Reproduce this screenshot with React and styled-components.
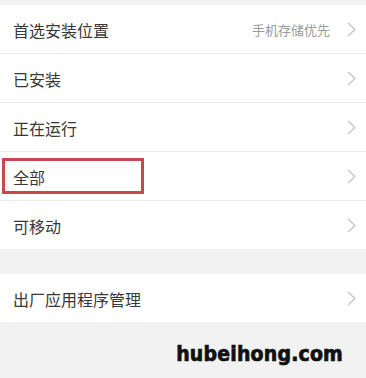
import React from "react";
import styled, { createGlobalStyle } from "styled-components";

const Global = createGlobalStyle`
  html, body { margin: 0; padding: 0; background: #f2f2f2; }
  body { font-family: "Noto Sans CJK SC", "Noto Sans", sans-serif; }
  #root { width: 366px; height: 378px; overflow: hidden; }
`;

const Page = styled.div`
  width: 366px;
  height: 378px;
  background: #f2f2f2;
  padding-top: 5px;
  box-sizing: border-box;
  display: flex;
  flex-direction: column;
`;

const Section = styled.div`
  background: #fff;
  margin-bottom: ${(p) => p.$gap || 0}px;
`;

const Row = styled.div`
  position: relative;
  height: 48px;
  display: flex;
  align-items: center;
  padding: 0 10px 0 13px;
  border-bottom: ${(p) => (p.$last ? "none" : "1px solid #ebebeb")};
`;

const Label = styled.div`
  flex: 1;
  font-size: 16px;
  color: #383838;
  padding-top: 1px;
`;

const Value = styled.div`
  font-size: 13px;
  color: #9a9a9a;
  margin-right: 17px;
`;

const Highlight = styled.div`
  position: absolute;
  left: 2px;
  top: 6px;
  width: 142px;
  height: 36px;
  border: 3px solid #c9474a;
  box-sizing: border-box;
  pointer-events: none;
`;

const Footer = styled.div`
  display: flex;
  justify-content: flex-end;
  padding: 20px 23px 0 0;
`;

const Mark = styled.div`
  font-family: "DejaVu Sans Condensed", "DejaVu Sans", sans-serif;
  font-stretch: condensed;
  font-weight: 700;
  font-size: 21px;
  color: #111;
  -webkit-text-stroke: 0.7px #111;
  letter-spacing: 0.2px;
`;

const Chevron = () => (
  <svg width="9" height="15" viewBox="0 0 9 15">
    <path d="M1.2 1 L7.8 7.5 L1.2 14" fill="none" stroke="#c4c4c4" strokeWidth="1.3" />
  </svg>
);

const rows = [
  { label: "首选安装位置", value: "手机存储优先" },
  { label: "已安装" },
  { label: "正在运行" },
  { label: "全部", highlight: true },
  { label: "可移动" },
];

export default function App() {
  return (
    <>
      <Global />
      <Page>
        <Section $gap={25}>
          {rows.map((r, i) => (
            <Row key={r.label} $last={i === rows.length - 1}>
              <Label>{r.label}</Label>
              {r.value && <Value>{r.value}</Value>}
              <Chevron />
              {r.highlight && <Highlight />}
            </Row>
          ))}
        </Section>
        <Section>
          <Row $last>
            <Label>出厂应用程序管理</Label>
            <Chevron />
          </Row>
        </Section>
        <Footer>
          <Mark>hubeihong.com</Mark>
        </Footer>
      </Page>
    </>
  );
}
